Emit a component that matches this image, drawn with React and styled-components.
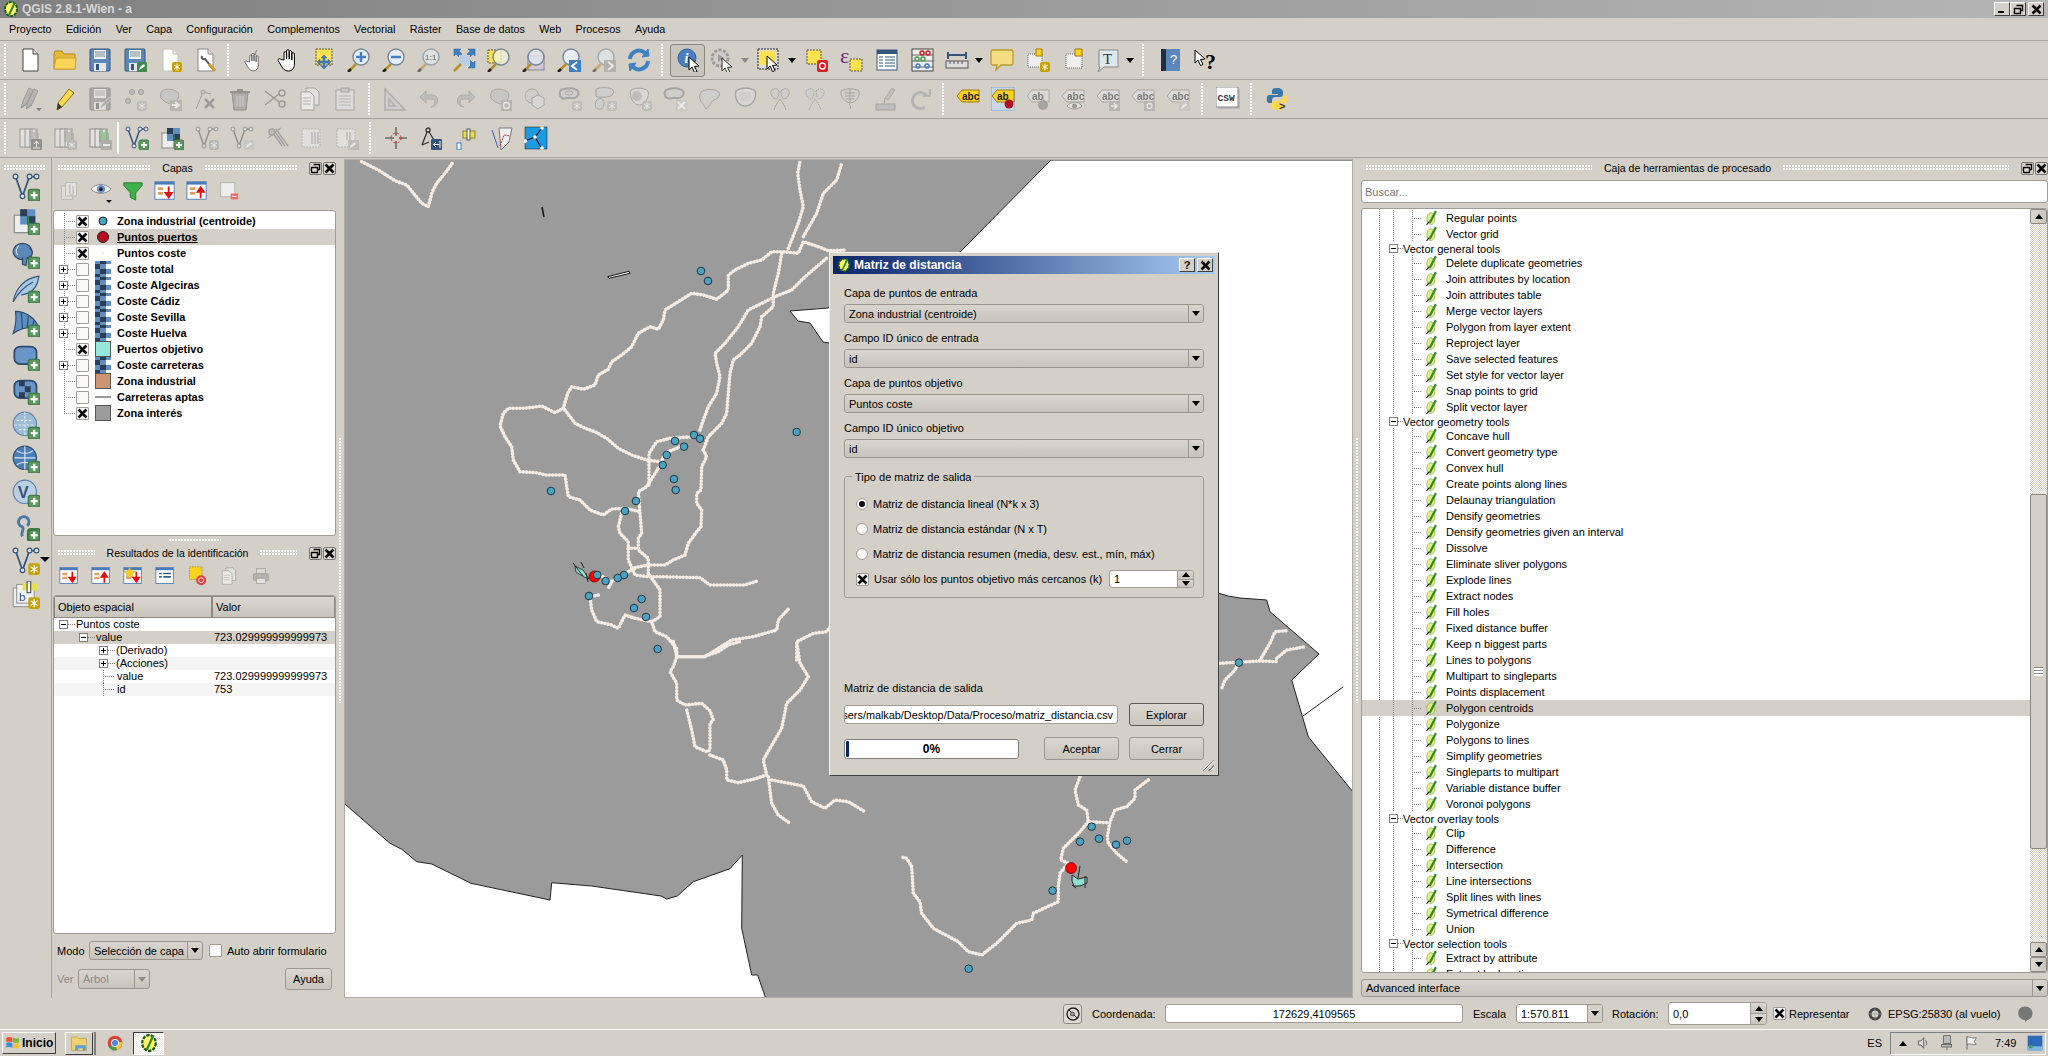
import React from 'react';
import styled, { createGlobalStyle } from 'styled-components';

const GlobalStyle = createGlobalStyle`
  html, body { margin: 0; padding: 0; overflow: hidden; background: #d4d0c8; }
  body { font: 11px "Liberation Sans", Arial, sans-serif; color: #000; }
  * { box-sizing: border-box; }
  svg { display: block; flex: none; }
`;

const BG = '#d4d0c8';
const LINE = '#a8a49c';
const dots = `radial-gradient(circle at 1px 1px, #fff 0.9px, transparent 1.1px)`;
const guideV = (x, h = '100%') => `repeating-linear-gradient(#808080 0 1px, transparent 1px 2px) ${x}px 0 / 1px ${h} no-repeat`;
const guideH = (x, w) => `repeating-linear-gradient(90deg, #808080 0 1px, transparent 1px 2px) ${x}px 50% / ${w}px 1px no-repeat`;

const Desktop = styled.div`
  width: 2048px; height: 1056px; display: flex; flex-direction: column;
  position: relative; overflow: hidden; background: ${BG};
`;
const TitleBar = styled.div`
  height: 18px; display: flex; align-items: center; padding: 0 4px 0 3px; gap: 3px;
  background: linear-gradient(90deg, #808080, #b5b5b5); color: #d8d8d8;
  font-size: 12px; font-weight: bold; white-space: nowrap;
`;
const WinButtons = styled.div`margin-left: auto; display: flex; gap: 0;`;
const WinButton = styled.div`
  width: 16px; height: 14px; margin-left: ${p => p.$gap || 0}px; background: ${BG};
  border: 1px solid; border-color: #fff #404040 #404040 #fff;
  display: flex; align-items: center; justify-content: center;
`;
const MenuBar = styled.div`
  height: 23px; display: flex; align-items: center; padding: 0 0 0 9px; gap: 14.3px; font-size: 10.8px;
  border-bottom: 1px solid ${LINE};
`;
const Toolbar = styled.div`
  height: 39px; display: flex; align-items: center; border-bottom: 1px solid ${LINE};
`;
const Grip = styled.div`
  width: ${p => p.$w}px; height: 32px; flex: none;
  background-image: ${dots}; background-size: 3px 3px; background-repeat: repeat-y;
  background-position: ${p => Math.max(2, Math.round(p.$w / 2) - 2)}px 0;
`;
const ToolDivider = styled.div`width: 2px; height: 32px; background: #fff; flex: none;`;
const Tool = styled.div`
  width: ${p => p.$w || 35}px; height: 33px; flex: none; display: flex; align-items: center; justify-content: center;
  ${p => p.$off && 'filter: grayscale(1) opacity(.5);'}
  ${p => p.$on && `background: #c9c5bd; border: 1px solid #8a867e; border-radius: 3px;`}
`;
const DropArrow = styled.div`
  width: 0; height: 0; border: 4.5px solid transparent; border-top: 5px solid ${p => p.$off ? '#8a8a8a' : '#000'}; border-bottom: 0;
`;

const Body = styled.div`height: 840px; display: flex; flex: none;`;
const LeftBar = styled.div`
  width: 52px; flex: none; border-right: 1px solid ${LINE}; padding-top: 12px;
  display: flex; flex-direction: column; position: relative;
`;
const LeftBarGrip = styled.div`
  position: absolute; left: 4px; top: 7px; width: 42px; height: 6px;
  background-image: ${dots}; background-size: 3px 3px;
`;
const LeftTool = styled.div`
  height: 34px; display: flex; align-items: center; justify-content: center; position: relative;
`;
const LeftToolArrow = styled.div`
  position: absolute; right: 1px; top: 13px; width: 0; height: 0; border: 5px solid transparent; border-top: 5px solid #000; border-bottom: 0;
`;
const Dock = styled.div`
  width: ${p => p.$w}px; flex: none; display: flex; flex-direction: column; padding: ${p => p.$pad || '2px 1px 0'};
`;
const DockTitle = styled.div`
  height: 16px; flex: none; display: flex; align-items: center; gap: 12px; padding: 0 0 0 5px; white-space: nowrap; font-size: 10.5px;
`;
const TitleGrip = styled.div`
  flex: 1 1 0; min-width: 0; height: 6px; background-image: ${dots}; background-size: 3px 3px;
`;
const DockBtns = styled.div`display: flex; flex: none;`;
const DockBtn = styled.div`
  width: 13px; height: 13px; margin-left: ${p => p.$ml ?? 1}px; border: 1px solid #777; border-radius: 2px; background: #dedad3;
  display: flex; align-items: center; justify-content: center;
`;
const IconRow = styled.div`height: 30px; flex: none; display: flex; align-items: center;`;
const PanelTool = styled.div`
  width: 32px; height: 28px; flex: none; display: flex; align-items: center; justify-content: center; position: relative;
  ${p => p.$off && 'filter: grayscale(1) opacity(.55);'}
`;
const MiniArrow = styled.div`
  position: absolute; right: 5px; bottom: 2px; width: 0; height: 0; border: 3px solid transparent; border-top: 3px solid #000; border-bottom: 0;
`;
const Sunken = styled.div`
  background: #fff; border: 1px solid #a09c94; border-radius: 3px; overflow: hidden; flex: none;
  margin-top: ${p => p.$mt || 0}px; height: ${p => p.$h}px; padding-top: ${p => p.$pt || 0}px;
`;
const LayerRow = styled.div`
  height: 16px; display: flex; align-items: center; font-weight: bold;
  background: ${p => p.$sel ? BG : 'transparent'};
  text-decoration: ${p => p.$sel ? 'underline' : 'none'};
`;
const LayerGuide = styled.div`
  width: 22px; height: 16px; flex: none; display: flex; align-items: center; padding-left: 5px;
  background: ${guideH(10, 12)}, ${p => guideV(10, p.$last ? '8px' : '100%')};
`;
const ExpBox = styled.div`
  width: 9px; height: 9px; border: 1px solid #808080; background: #fff; position: relative; flex: none;
  &::before { content: ''; position: absolute; left: 1px; top: 3px; width: 5px; height: 1px; background: #000; }
  ${p => !p.$open && `&::after { content: ''; position: absolute; left: 3px; top: 1px; width: 1px; height: 5px; background: #000; }`}
`;
const Check = styled.div`
  width: 13px; height: 13px; flex: none; margin-left: ${p => p.$ml || 0}px; border: 1px solid #a09c94; border-radius: 1px; background: #fafafa;
  display: flex; align-items: center; justify-content: center;
`;
const SymbolSlot = styled.div`
  width: 16px; height: 16px; margin: 0 6px; flex: none; display: flex; align-items: center; justify-content: center;
`;
const Splitter = styled.div`
  width: ${p => p.$w}px; flex: none; display: flex; align-items: center; justify-content: center;
`;
const SplitGrip = styled.div`
  width: 3px; height: 265px; margin-top: -16px; background-image: ${dots}; background-size: 3px 3px;
`;
const HandleRow = styled.div`height: 9px; flex: none; display: flex; align-items: center; justify-content: center;`;
const HandleGrip = styled.div`width: 52px; height: 3px; background-image: ${dots}; background-size: 3px 3px;`;

const TableHead = styled.div`height: 22px; display: flex;`;
const HeadCell = styled.div`
  width: ${p => p.$w}px; height: 22px; flex: ${p => p.$w ? 'none' : 1}; background: linear-gradient(#dcd8d1, #c8c4bc);
  border: 1px solid #8d8980; display: flex; align-items: center; padding-left: 3px; font-size: 11px;
`;
const ResultRow = styled.div`
  height: 13px; line-height: 13px; display: flex; align-items: center; white-space: nowrap;
  background: ${p => p.$sel ? BG : p.$alt ? '#f5f5f5' : '#fff'};
`;
const ResultName = styled.div`
  width: 160px; height: 13px; flex: none; display: flex; align-items: center; gap: 8px; padding-left: ${p => p.$in}px;
  background: ${p => p.$leaf ? `${guideV(p.$in + 4)}, ${guideH(p.$in + 4, 12)}` : guideH(p.$in + 9, 7)};
`;
const LeafName = styled.span`padding-left: 18px;`;
const FormRow = styled.div`
  display: flex; align-items: center; height: ${p => p.$h}px; margin-top: ${p => p.$mt}px; padding-left: 4px; flex: none;
`;
const FormLabel = styled.div`
  width: ${p => p.$w}px; flex: none; margin-left: ${p => p.$ml || 0}px; color: ${p => p.$off ? '#8a8a8a' : '#000'}; white-space: nowrap;
`;
const Combo = styled.div`
  width: ${p => p.$w ? `${p.$w}px` : '100%'}; height: ${p => p.$h || 19}px; flex: none; display: flex; align-items: center;
  background: ${p => p.$field ? '#fff' : 'linear-gradient(#dad6cf, #c8c4bc)'}; border: 1px solid #9b978f; border-radius: 3px; white-space: nowrap;
  color: ${p => p.$off ? '#8a8a8a' : '#000'}; overflow: hidden;
`;
const ComboText = styled.div`flex: 1; padding-left: 4px;`;
const ComboArrow = styled.div`
  width: 15px; height: 100%; border-left: 1px solid #9b978f; display: flex; align-items: center; justify-content: center; flex: none;
  ${p => p.$solid && `background: ${BG};`}
`;
const ComboGap = styled.div`height: 6px; flex: none;`;
const PushButton = styled.div`
  width: ${p => p.$w}px; height: ${p => p.$h}px; flex: none; display: flex; align-items: center; justify-content: center;
  margin-left: ${p => p.$ml || 0}px; background: linear-gradient(#dcd8d1, #c9c5bd);
  border: 1px solid ${p => p.$def ? '#5c5a55' : '#9b978f'}; border-radius: 3px;
`;

const MapFrame = styled.div`
  width: 1009px; flex: none; margin-top: 1px; border: 1px solid #b0aca4; overflow: hidden; background: #9b9b9b;
`;

const SearchBox = styled.div`
  height: 23px; margin-top: 4px; flex: none; background: #fff; border: 1px solid #a09c94; border-radius: 3px;
  display: flex; align-items: center; padding-left: 3px; color: #777;
`;
const ToolTreeBox = styled.div`
  height: 765px; margin-top: 5px; flex: none; display: flex; background: #fff; border: 1px solid #a09c94; border-radius: 3px; overflow: hidden;
`;
const ToolTree = styled.div`
  flex: 1; overflow: hidden; padding-top: 1px;
  background: ${guideV(17)};
`;
const CategoryRow = styled.div`
  height: 13px; display: flex; align-items: center; gap: 5px; padding-left: 27px; white-space: nowrap;
  background: ${guideH(36, 6)};
`;
const ItemRow = styled.div`
  height: 16px; display: flex; align-items: center; padding-left: 62px; white-space: nowrap;
  background: ${guideV(31)}, ${guideV(50)}, ${guideH(50, 10)}, ${p => p.$sel ? BG : 'transparent'};
`;
const ItemLabel = styled.span`margin-left: 7px;`;
const ScrollBar = styled.div`
  width: 17px; flex: none; display: flex; flex-direction: column;
  background: repeating-conic-gradient(#fff 0 25%, ${BG} 0 50%) 0 0 / 2px 2px;
`;
const ScrollBtn = styled.div`
  height: 15px; flex: none; background: linear-gradient(90deg, #dcd8d1, #c9c5bd); border: 1px solid #8d8980; border-radius: 2px;
  display: flex; align-items: center; justify-content: center;
`;
const ScrollThumb = styled.div`
  height: 355px; flex: none; margin-top: 270px; margin-bottom: auto; background: ${BG}; border: 1px solid #8d8980; border-radius: 2px;
  display: flex; align-items: center; justify-content: center;
`;
const ThumbRidges = styled.div`
  width: 9px; height: 9px; background: repeating-linear-gradient(#8d8980 0 1px, #fff 1px 3px);
`;
const Tri = styled.div`
  width: 0; height: 0; border-left: 4px solid transparent; border-right: 4px solid transparent;
  ${p => p.$up ? 'border-bottom: 5px solid #000;' : 'border-top: 5px solid #000;'}
`;

const StatusBar = styled.div`
  height: 31px; flex: none; display: flex; align-items: center; padding-left: 1063px; white-space: nowrap;
`;
const StatusIcon = styled.div`
  width: 19px; height: 20px; flex: none; margin-right: 10px; background: #dedad3; border: 1px solid #8d8980; border-radius: 3px;
  display: flex; align-items: center; justify-content: center;
`;
const StatusText = styled.div`width: ${p => p.$w}px; flex: none; margin-left: ${p => p.$ml || 0}px;`;
const LineInput = styled.div`
  width: ${p => p.$w}px; height: ${p => p.$h}px; flex: none; display: flex; align-items: center;
  justify-content: ${p => p.$center ? 'center' : 'flex-end'}; padding-right: ${p => p.$center ? 0 : 4}px; overflow: hidden; white-space: nowrap;
  font-size: ${p => p.$center ? 11 : 10.85}px;
  background: #fff; border: 1px solid #a09c94; border-radius: 3px;
`;
const SpinBox = styled.div`
  width: ${p => p.$w}px; height: ${p => p.$h}px; flex: none; display: flex; background: #fff; border: 1px solid #a09c94; border-radius: 3px; overflow: hidden;
`;
const SpinText = styled.div`flex: 1; display: flex; align-items: center; padding-left: 4px;`;
const SpinArrows = styled.div`
  width: 16px; flex: none; display: flex; flex-direction: column; border-left: 1px solid #a09c94;
`;
const SpinPart = styled.div`
  flex: 1; background: linear-gradient(#dcd8d1, #c9c5bd); display: flex; align-items: center; justify-content: center;
  & + & { border-top: 1px solid #a09c94; }
`;

const Taskbar = styled.div`
  height: 27px; flex: none; border-top: 1px solid #fff; display: flex; align-items: center; padding: 0 2px;
`;
const StartButton = styled.div`
  width: 54px; height: 22px; flex: none; display: flex; align-items: center; gap: 1px; padding-left: 2px;
  font-weight: bold; font-size: 12px; background: ${BG}; border: 1px solid; border-color: #fff #404040 #404040 #fff;
`;
const TaskApp = styled.div`
  width: ${p => p.$w}px; height: 23px; flex: none; margin-left: ${p => p.$ml || 0}px; display: flex; align-items: center; justify-content: center;
  border: 1px solid; border-color: ${p => p.$down ? '#404040 #fff #fff #404040' : '#fff #404040 #404040 #fff'};
  ${p => p.$down && 'background: repeating-conic-gradient(#fff 0 25%, #f0eee8 0 50%) 0 0 / 2px 2px;'}
`;
const TaskSeam = styled.div`width: 3px; height: 23px; flex: none; border-right: 2px solid #808080;`;
const TaskPlain = styled.div`width: ${p => p.$w}px; flex: none; display: flex; align-items: center; justify-content: center;`;
const Lang = styled.div`margin-left: auto; margin-right: 8px;`;
const Tray = styled.div`
  width: 156px; height: 23px; flex: none; display: flex; align-items: center; gap: 8px; padding-left: 8px;
  border: 1px solid; border-color: #808080 #fff #fff #808080;
`;
const Clock = styled.div`margin: 0 3px 0 8px;`;

const Dialog = styled.div`
  position: absolute; left: 829px; top: 252px; width: 390px; height: 524px; padding: 3px; background: ${BG};
  border: 1px solid; border-color: #f4f2ee #404040 #404040 #f4f2ee; display: flex; flex-direction: column;
`;
const DialogTitle = styled.div`
  height: 18px; flex: none; display: flex; align-items: center; gap: 3px; padding: 0 2px 0 4px;
  background: linear-gradient(90deg, #0a246a, #a6caf0); color: #fff; font-weight: bold; font-size: 12px;
`;
const DialogBtns = styled.div`margin-left: auto; display: flex; gap: 2px;`;
const DialogBtn = styled.div`
  width: 16px; height: 14px; background: ${BG}; color: #000; display: flex; align-items: center; justify-content: center;
  border: 1px solid; border-color: #fff #404040 #404040 #fff; font-size: 11px; line-height: 1;
`;
const DialogBody = styled.div`flex: 1; padding: 12px 11px 0; position: relative;`;
const Field = styled.div`margin-bottom: 8px;`;
const FieldLabel = styled.div`height: 14px; line-height: 14px; margin-bottom: 4px;`;
const Group = styled.div`
  height: 122px; margin-top: 18px; padding: 18px 0 0 11px; position: relative; border: 1px solid #a09c94; border-radius: 3px;
  display: flex; flex-direction: column; gap: 7px;
`;
const Legend = styled.div`position: absolute; left: 7px; top: -7px; padding: 0 3px; background: ${BG}; line-height: 14px;`;
const OptionRow = styled.div`height: 18px; display: flex; align-items: center; gap: 5px; white-space: nowrap;`;
const OptionText = styled.div`width: 230px;`;
const Radio = styled.div`
  width: 12px; height: 12px; flex: none; border-radius: 50%; background: #fbfbfb; border: 1px solid #a09c94; display: flex; align-items: center; justify-content: center;
  &::after { content: ''; width: 6px; height: 6px; border-radius: 50%; background: ${p => p.$on ? '#000' : 'transparent'}; }
`;
const OutLabel = styled.div`height: 14px; line-height: 14px; margin-top: 83px;`;
const OutRow = styled.div`height: 23px; margin-top: 8px; display: flex; align-items: center;`;
const BottomRow = styled.div`height: 23px; margin-top: 11px; display: flex; align-items: center;`;
const Progress = styled.div`
  width: 175px; height: 20px; flex: none; position: relative; background: #fff; border: 1px solid #808080; border-radius: 3px;
  display: flex; align-items: center; justify-content: center; font-weight: bold; font-size: 12px; overflow: hidden;
`;
const ProgressFill = styled.div`position: absolute; left: 1px; top: 1px; bottom: 1px; width: 3px; background: #0a246a; border-radius: 1px;`;
const SizeGrip = styled.div`
  position: absolute; right: 1px; bottom: 1px; width: 13px; height: 13px;
  background: repeating-linear-gradient(135deg, transparent 0 2px, #888 2px 3px, #fff 3px 4px);
  clip-path: polygon(100% 0, 100% 100%, 0 100%);
`;

/* ---------- icons ---------- */
const Plus = () => (<g><rect x="14" y="14" width="10" height="10" rx="2" fill="#5b9a5e" stroke="#3f7a44" /><path d="M19 16v6M16 19h6" stroke="#fff" strokeWidth="2" /></g>);
const Star = ({ c = '#c9a000' }) => (<g><rect x="14" y="14" width="10" height="10" rx="2" fill={c} /><path d="M19 15.5v7M16 17l6 4M22 17l-6 4" stroke="#fff" /></g>);
const GreenEdit = () => (<g><rect x="14" y="14" width="10" height="10" rx="1" fill="#3f8a4a" /><path d="M16 22l1-3 4-3 1 2-4 3z" fill="#fff" /></g>);
const Cursor = ({ x = 10, y = 8, k = 1 }) => (<path transform={`translate(${x} ${y}) scale(${k})`} d="M0 0v13l3-3 2.5 5.5 2.5-1L5.5 9.5 10 9z" fill="#fff" stroke="#000" />);
const Page = ({ stroke = '#444' }) => (<g><path d="M5 1h10l5 5v17H5z" fill="#fff" stroke={stroke} /><path d="M15 1v5h5" fill="#e4e4e4" stroke={stroke} /></g>);
const Floppy = () => (<g><rect x="2" y="1" width="20" height="22" rx="1" fill="#5b88b8" stroke="#34557a" /><rect x="6" y="2" width="12" height="9" fill="#f2f4f6" /><path d="M7 4h10M7 6h10M7 8h10" stroke="#7a8a9a" /><rect x="6" y="15" width="12" height="8" fill="#e6e6e6" /><rect x="8" y="16" width="3" height="6" fill="#34557a" /></g>);
const Lens = ({ children, glass = '#e8eef4' }) => (<g><path d="M2 23l7-7" stroke="#b5902a" strokeWidth="2.5" /><path d="M1 24l3-3" stroke="#222" strokeWidth="2.5" /><circle cx="14" cy="9" r="8" fill={glass} stroke="#7a8a9a" strokeWidth="1.5" />{children}</g>);
const Hand = ({ fill = '#fff', stroke = '#000' }) => (<path d="M7 12V5a1.3 1.3 0 0 1 2.6 0v6V3a1.3 1.3 0 0 1 2.6 0v8V4a1.3 1.3 0 0 1 2.6 0v8V6a1.3 1.3 0 0 1 2.6 0v10c0 4-2 7-6 7s-5-2-7-5l-3-5c-1-2 1-3 2.5-1.5z" fill={fill} stroke={stroke} strokeLinejoin="round" />);
const YellowDash = ({ x = 3, y = 3, s = 16 }) => (<rect x={x} y={y} width={s} height={s} fill="#ffe24d" stroke="#555" strokeDasharray="2 1" />);
const Blob = ({ fill = '#bbb' }) => (<path d="M4 4c4-3 10-2 14 0c4 2 3 7 1 9c-3 2-3 5-7 4c-3-1-7-3-9-6c-1-2 0-6 1-7z" fill={fill} stroke="#777" />);
const DocStack = () => (<g><rect x="2" y="3" width="7" height="18" fill="#eee" stroke="#666" /><rect x="7" y="3" width="7" height="18" fill="#eee" stroke="#666" /><rect x="12" y="3" width="7" height="18" fill="#eee" stroke="#666" /></g>);
const Grass = () => (<path d="M12 16V5M14 16V3M16 16V6M18 16V4M20 16V7" stroke="#3f9a4a" strokeWidth="1.3" />);
const VLine = () => (<g><path d="M3 3l6 17 6-17h6" fill="none" stroke="#34557a" strokeWidth="1.5" /><g fill="#dfe8f0" stroke="#34557a"><circle cx="3" cy="3" r="2" /><circle cx="9" cy="20" r="2" /><circle cx="15" cy="3" r="2" /><circle cx="21" cy="3" r="2" /></g></g>);
const Globe = ({ children }) => (<g><circle cx="11" cy="11" r="10" fill="#9dbcd8" stroke="#5a7fa8" /><path d="M4 8h14M2 12h18M6 16h10M11 1v20" stroke="#e4eef6" strokeDasharray="2 1.5" />{children}</g>);
const Sheet = ({ up, star }) => (<g><rect x="1" y="2" width="21" height="19" fill="#fff" stroke="#4a7ab8" /><rect x="1" y="2" width="21" height="3" fill="#4a7ab8" /><path d="M4 8h6v3H4zM4 13h6v3H4z" fill="#e8a060" />{star && <path d="M8 1l2 5 5 .5-4 3 1.5 5L8 12l-4.500 2.500L5 9.500l-4-3 5-.5z" fill="#ffd21f" stroke="#b08a20" strokeWidth=".5" />}<path d={up ? 'M16 20V11M12.500 13l3.500-5 3.500 5z' : 'M16 7v9M12.500 14l3.500 5 3.500-5z'} stroke="#e01010" strokeWidth="2" fill="#e01010" /></g>);
const TwoDocs = () => (<g><path d="M8 1h9l4 4v13H8z" fill="#eee" stroke="#777" /><path d="M3 5h9l4 4v14H3z" fill="#fff" stroke="#777" /><path d="M5 11h8M5 14h8M5 17h8" stroke="#999" /></g>);
const AbcTag = ({ fill = '#ffd21f', txt = 'abc' }) => (<g><path d="M1 9l5-6h17v12H6z" fill={fill} stroke="#9a7a10" strokeWidth="1" /><text x="6" y="13" fontFamily="Liberation Sans" fontWeight="bold" fontSize="10" fill="#222">{txt}</text></g>);
const GrayTag = ({ txt = 'abc' }) => (<AbcTag fill="#e4e2dc" txt={txt} />);
const QLeaf = () => (<g><ellipse cx="11" cy="13" rx="6.500" ry="9.500" fill="#e2ee80" stroke="#8aa52a" /><path d="M19 1L9 20" stroke="#2f8a2f" strokeWidth="3.500" /><path d="M4 23l4-5" stroke="#222" strokeWidth="1.800" /></g>);
const XMark = () => (<svg width="11" height="11" viewBox="0 0 11 11"><path d="M1.500 1.500l8 8M9.500 1.500l-8 8" stroke="#000" strokeWidth="2.600" /></svg>);

const ICONS = {
  doc: <Page />,
  folder: <g><path d="M1 6l1-3h7l2 3h11v15H1z" fill="#e8b93a" stroke="#b08a20" /><path d="M1 21l2-11h20l-1 11z" fill="#ffd65a" stroke="#c9a030" /></g>,
  floppy: <Floppy />,
  floppyEdit: <g><Floppy /><GreenEdit /></g>,
  docStar: <g><Page stroke="#c4c0b8" /><Star /></g>,
  docWrench: <g><Page stroke="#888" /><path d="M9 8c-1 2 1 4 3 3l8 10" stroke="#555" strokeWidth="2" fill="none" /><path d="M16 16l6 7" stroke="#c9a030" strokeWidth="3" /></g>,
  touch: <g><path d="M15 2l-5 9" stroke="#777" /><g transform="translate(2 4) scale(.82)"><Hand stroke="#555" /></g></g>,
  hand: <Hand />,
  panSel: <g><YellowDash x="4" y="1" s="16" /><path d="M12 7l3 3h-2v3h3v-2l3 3-3 3v-2h-3v3h2l-3 3-3-3h2v-3H8v2l-3-3 3-3v2h3v-3H9z" fill="#3f7fc4" stroke="#2f5f94" strokeWidth=".5" /></g>,
  zoomIn: <Lens><path d="M14 4v10M9 9h10" stroke="#3f7fc4" strokeWidth="2.500" /></Lens>,
  zoomOut: <Lens><path d="M9 9h10" stroke="#3f7fc4" strokeWidth="2.500" /></Lens>,
  zoom11: <g opacity=".6"><Lens><text x="8" y="12" fontFamily="Liberation Sans" fontWeight="bold" fontSize="8" fill="#555">1:1</text></Lens></g>,
  zoomFull: <g><path d="M2 1h7L7 3l3 3-3 3-3-3-2 2zM23 1v7l-2-2-3 3-3-3 3-3-2-2zM23 20h-7l2-2-3-3 3-3 3 3 2-2z" fill="#3f7fc4" stroke="#2f5f94" strokeWidth=".5" /><rect x="7" y="7" width="11" height="11" fill="#b8cfe4" /><path d="M2 23l7-7" stroke="#b5902a" strokeWidth="2.500" /></g>,
  zoomSel: <g><YellowDash x="1" y="2" s="13" /><Lens glass="rgba(240,244,220,.75)" /></g>,
  zoomLayer: <g><rect x="6" y="8" width="16" height="14" fill="#cfc8d8" stroke="#8a8298" /><Lens glass="rgba(225,230,240,.8)" /></g>,
  zoomLast: <g><Lens /><rect x="12" y="12" width="12" height="12" fill="#3f7fc4" /><path d="M20 14l-5 4 5 4" stroke="#fff" strokeWidth="2" fill="none" /></g>,
  zoomNext: <g opacity=".55"><Lens /><rect x="12" y="12" width="12" height="12" fill="#999" /><path d="M16 14l5 4-5 4" stroke="#fff" strokeWidth="2" fill="none" /></g>,
  refresh: <g fill="none" stroke="#3f7fc4" strokeWidth="4"><path d="M3 11a9 9 0 0 1 15-6" /><path d="M21 13a9 9 0 0 1-15 6" /><path d="M15 9l7-1-1-7z M9 15l-7 1 1 7z" fill="#3f7fc4" strokeWidth="1" /></g>,
  identify: <g><circle cx="11" cy="10" r="9" fill="#4a80c0" stroke="#2f5f94" /><text x="8.500" y="15" fontFamily="Liberation Serif" fontStyle="italic" fontWeight="bold" fontSize="14" fill="#fff">i</text><Cursor x="13" y="9" /></g>,
  run: <g opacity=".75"><circle cx="11" cy="10" r="8" fill="#ccc" stroke="#888" strokeWidth="3" strokeDasharray="3 1.500" /><path d="M9 6l6 4-6 4z" fill="#888" /><Cursor x="13" y="10" /></g>,
  select: <g><rect x="1" y="1" width="20" height="20" fill="#ddd" stroke="#222" strokeDasharray="2 1" /><rect x="3" y="3" width="15" height="14" fill="#ffe24d" /><Cursor x="10" y="8" /></g>,
  deselect: <g><YellowDash x="2" y="2" s="14" /><rect x="12" y="12" width="11" height="12" rx="2" fill="#d82020" /><circle cx="17.500" cy="18" r="3" fill="none" stroke="#fff" strokeWidth="1.300" /></g>,
  expr: <g><text x="0" y="15" fontFamily="Liberation Serif" fontSize="22" fill="#6a2a7a">ε</text><YellowDash x="10" y="11" s="12" /></g>,
  attrTable: <g><rect x="2" y="2" width="20" height="20" fill="#fff" stroke="#34557a" /><rect x="2" y="2" width="20" height="4" fill="#34557a" /><path d="M4 9h4M10 9h10M4 12h4M10 12h10M4 15h4M10 15h10M4 18h4M10 18h10" stroke="#34557a" /></g>,
  abacus: <g><rect x="2" y="1" width="21" height="22" fill="#eee" stroke="#444" /><path d="M2 7h21M2 13h21M2 19h21" stroke="#666" /><g fill="none" strokeWidth="1.500"><circle cx="12" cy="5" r="2" stroke="#c02020" /><circle cx="18" cy="5" r="2" stroke="#c02020" /><circle cx="7" cy="11" r="2" stroke="#4a9a4a" /><circle cx="13" cy="11" r="2" stroke="#4a9a4a" /><circle cx="8" cy="18" r="2" stroke="#3f7fc4" /><circle cx="17" cy="18" r="2" stroke="#3f7fc4" /></g></g>,
  ruler: <g><path d="M3 4v7M21 4v7M3 7h18" stroke="#34557a" strokeWidth="2" /><rect x="1" y="13" width="22" height="7" fill="#ddd" stroke="#555" /><path d="M5 13v3M9 13v3M13 13v3M17 13v3" stroke="#555" /></g>,
  bubble: <path d="M3 2h18q2 0 2 2v11q0 2-2 2H11l-5 5 1-5H3q-2 0-2-2V4q0-2 2-2z" fill="#f4dc80" stroke="#b89a30" strokeWidth="1.300" />,
  annoStar: <g><rect x="2" y="6" width="14" height="13" fill="#eee" stroke="#666" strokeDasharray="1 1" /><path d="M10 1h6v7h-6z" fill="#ffd21f" stroke="#9a7a10" /><Star /></g>,
  anno: <g><rect x="4" y="6" width="16" height="14" fill="#eee" stroke="#666" strokeDasharray="1 1" /><path d="M13 1h7v7h-7z" fill="#ffd21f" stroke="#9a7a10" /></g>,
  textT: <g><path d="M3 2h19v17H8l-6 5 2-5H3z" fill="#dfe7ee" stroke="#888" /><text x="7" y="16" fontFamily="Liberation Serif" fontSize="15" fill="#333">T</text></g>,
  help: <g><rect x="3" y="1" width="19" height="22" fill="#5b88b8" /><rect x="3" y="1" width="5" height="22" fill="#1f2f44" /><text x="12" y="16" fontFamily="Liberation Sans" fontSize="13" fill="#fff">?</text></g>,
  whats: <g><Cursor x="2" y="2" /><text x="12" y="21" fontFamily="Liberation Serif" fontWeight="bold" fontSize="22" fill="#000">?</text></g>,

  pencils: <g><path d="M3 21l2-7L11 1l4 2-6 13zM8 22l2-7L16 2l4 2-6 13z" fill="#999" stroke="#666" /><path d="M3 21l6-4M8 22l6-4" stroke="#555" /><path d="M18 21h6l-3 3z" fill="#333" /></g>,
  pencil: <g><path d="M4 23l1-7L16 2l5 4L9 20z" fill="#ffd84a" stroke="#8a7018" /><path d="M4 23l1-7 4 4z" fill="#333" /></g>,
  saveEdit: <g><Floppy /><path d="M12 22l2-5 8-7 2 2-8 7z" fill="#888" stroke="#fff" strokeWidth=".5" /></g>,
  ptsAdd: <g><g fill="#aaa" stroke="#666"><circle cx="5" cy="14" r="2.500" /><circle cx="9" cy="5" r="2.500" /><circle cx="18" cy="5" r="2.500" /></g><Star c="#aaa" /></g>,
  blobArrow: <g><Blob /><rect x="12" y="13" width="12" height="11" fill="#999" /><path d="M14 18h5M17 15l4 3-4 3" stroke="#fff" strokeWidth="2" fill="none" /></g>,
  nodeTool: <g><path d="M3 22L10 5l8 2" fill="none" stroke="#666" /><circle cx="10" cy="5" r="2" fill="#ccc" stroke="#666" /><path d="M12 12l9 9M21 12l-9 9" stroke="#666" strokeWidth="2.500" /></g>,
  trash: <g><path d="M4 6h16l-2 17H6z" fill="#888" stroke="#555" /><path d="M2 5h20M9 3h6" stroke="#555" strokeWidth="2" /><path d="M9 9v11M12 9v11M15 9v11" stroke="#ddd" /></g>,
  cut: <g fill="none" stroke="#666" strokeWidth="1.500"><path d="M2 4l14 11M2 18L16 7" /><circle cx="19" cy="17" r="3" /><circle cx="19" cy="6" r="3" /></g>,
  copy: <TwoDocs />,
  paste: <g><rect x="3" y="3" width="18" height="20" fill="#e6e6e6" stroke="#777" /><rect x="8" y="1" width="8" height="4" fill="#bbb" stroke="#777" /><path d="M6 9h12M6 12h12M6 15h12M6 18h12" stroke="#999" /></g>,
  setSquare: <g fill="none" stroke="#888" strokeWidth="1.500"><path d="M2 2l20 21H2z" fill="#ccc" /><path d="M6 12l6 7H6z" fill="#d4d0c8" /></g>,
  undo: <path d="M8 4L2 10l6 6v-4h6c4 0 4 7-1 8c8 0 9-12 1-12H8z" fill="#aaa" stroke="#888" />,
  redo: <path d="M16 4l6 6-6 6v-4h-6c-4 0-4 7 1 8c-8 0-9-12-1-12h6z" fill="#aaa" stroke="#888" />,
  blobRot: <g><Blob /><rect x="13" y="13" width="11" height="11" fill="#999" /><circle cx="18.500" cy="18.500" r="3" fill="none" stroke="#fff" strokeWidth="1.500" /></g>,
  blobHex: <g><circle cx="9" cy="9" r="7" fill="#ccc" stroke="#777" /><path d="M15 8l6 3v7l-6 4-6-4v-7z" fill="#ddd" stroke="#777" /></g>,
  ringStar: <g><path d="M3 3c5-3 14-2 17 1c2 4-2 8-7 7c-4-1-7 2-9 0c-3-2-3-6-1-8z" fill="#ccc" stroke="#777" strokeWidth="2" /><ellipse cx="11" cy="6" rx="4" ry="2" fill="#d4d0c8" stroke="#777" /><Star c="#aaa" /></g>,
  twoBlobStar: <g><path d="M3 2c5-2 14-2 17 1c2 4-2 7-7 7c-4 0-8 1-10-1z" fill="#ccc" stroke="#777" /><path d="M3 14c3-4 8-3 8 2s-3 7-6 6c-3-1-3-5-2-8z" fill="#ccc" stroke="#777" /><Star c="#aaa" /></g>,
  partStar: <g><path d="M3 3c5-3 14-2 17 1c2 5-3 14-9 14c-6 0-10-9-8-15z" fill="#ddd" stroke="#777" /><circle cx="9" cy="9" r="5" fill="#aaa" /><Star c="#aaa" /></g>,
  ringX: <g><path d="M3 3c5-3 14-2 17 1c2 4-2 8-7 7c-4-1-7 2-9 0c-3-2-3-6-1-8z" fill="#ccc" stroke="#777" strokeWidth="2" /><rect x="13" y="13" width="11" height="11" fill="#bbb" /><path d="M15 15l7 7M22 15l-7 7" stroke="#fff" strokeWidth="2" /></g>,
  bean: <path d="M3 5c5-4 14-3 18 0c2 4-2 7-5 8c-3 1-5 8-8 9c-2-4-6-8-6-10c-1-3 0-5 1-7z" fill="#ccc" stroke="#777" />,
  ringed: <g><path d="M3 4c5-4 14-4 19 0c2 5-1 14-9 15c-8 1-12-9-10-15z" fill="#ddd" stroke="#777" strokeWidth="1.500" /><path d="M6 6c3-2 9-2 12 0c1 3-1 9-6 9c-5 0-7-6-6-9z" fill="#ccc" /></g>,
  split: <g fill="#ccc" stroke="#777"><path d="M3 4c2-3 7-3 8 0c0 3-1 8-3 8c-3 0-6-5-5-8zM13 4c2-3 7-3 8 0c1 3-2 8-5 8c-2 0-3-5-3-8z" /><path d="M6 23c1-4 4-8 6-11c2 3 5 7 6 11" fill="none" /></g>,
  split2: <g fill="#ccc" stroke="#777" strokeDasharray="1.500 .8"><path d="M3 4c2-3 7-3 8 0c0 3-1 8-3 8c-3 0-6-5-5-8zM13 4c2-3 7-3 8 0c1 3-2 8-5 8c-2 0-3-5-3-8z" /><path d="M6 23c1-4 4-8 6-11c2 3 5 7 6 11" fill="none" /></g>,
  merge: <g fill="#ccc" stroke="#777"><path d="M3 4c5-3 14-3 18 0c1 5-2 11-9 12c-6-1-10-7-9-12z" /><path d="M12 2v14M7 6h10M7 9h10M8 12h8" fill="none" /><path d="M12 16c-2 2 2 3 0 6" fill="none" /></g>,
  reshape: <g><path d="M19 1l3 2-7 10-3-2z" fill="#aaa" stroke="#888" /><path d="M12 11l-1 6" stroke="#777" /><rect x="3" y="17" width="19" height="6" fill="#aaa" stroke="#777" /></g>,
  rotate: <g fill="none" stroke="#999" strokeWidth="3"><path d="M19 9a8 8 0 1 0-2 11" /><path d="M15 9h7V2" strokeWidth="2" /></g>,
  abc: <AbcTag />,
  abcPin: <g><rect x="0" y="0" width="24" height="24" fill="#c8d8ea" stroke="#7aa0d0" /><AbcTag txt="ab" /><circle cx="18" cy="17" r="4.500" fill="#b01020" /></g>,
  abcMove: <g><GrayTag txt="ab" /><circle cx="17" cy="18" r="5" fill="#777" /><path d="M17 8v6" stroke="#777" /></g>,
  abcEye: <g><GrayTag /><path d="M6 19c4-5 11-5 15 0c-4 4-11 4-15 0z" fill="#eee" stroke="#666" /><circle cx="13.500" cy="19" r="2.500" fill="#666" /></g>,
  abcArrow: <g><GrayTag /><rect x="13" y="14" width="11" height="10" fill="#999" /><path d="M15 19h5M18 16l3 3-3 3" stroke="#fff" strokeWidth="1.500" fill="none" /></g>,
  abcRot: <g><GrayTag /><rect x="13" y="14" width="11" height="10" fill="#999" /><circle cx="18.500" cy="19" r="2.500" fill="none" stroke="#fff" strokeWidth="1.300" /></g>,
  abcEdit: <g><GrayTag /><rect x="13" y="14" width="11" height="10" fill="#bbb" /><path d="M15 22l1-3 4-3 1 2-4 3z" fill="#fff" /></g>,
  csw: <g><rect x="2" y="2" width="22" height="20" fill="#bbb" /><rect x="0" y="0" width="22" height="20" fill="#fff" stroke="#888" /><text x="1.500" y="14" fontFamily="Liberation Mono" fontWeight="bold" fontSize="9.500" fill="#333">CSW</text></g>,
  python: <g><path d="M12 1c-5 0-5 2-5 4v2h6v1H4c-3 0-3 8 0 8h3v-3c0-2 2-3 3-3h5c2 0 3-1 3-3V5c0-2-2-4-6-4z" fill="#3a76a8" /><path d="M13 23c5 0 5-2 5-4v-2h-6v-1h8c3 0 3-8 0-8h-2v3c0 2-2 3-3 3h-5c-2 0-3 1-3 3v3c0 2 2 3 6 3z" fill="#ffd84a" /><text x="14" y="23" fontFamily="Liberation Sans" fontWeight="bold" fontSize="11" fill="#333">&gt;</text></g>,

  rasUp: <g><DocStack /><Grass /><rect x="13" y="13" width="11" height="11" rx="1" fill="#34557a" /><path d="M18.500 15v6M16 18l2.500-3 2.500 3M15 22h7" stroke="#fff" fill="none" /></g>,
  rasStar: <g><DocStack /><Grass /><Star /></g>,
  rasMinus: <g opacity=".6"><DocStack /><Grass /><rect x="13" y="14" width="11" height="10" rx="1" fill="#999" /><path d="M15 19h7" stroke="#fff" strokeWidth="2" /></g>,
  vecAdd: <g><VLine /><Plus /></g>,
  rasAdd: <g><rect x="2" y="7" width="13" height="15" fill="#eee" stroke="#888" /><rect x="7" y="2" width="13" height="13" fill="#5f8fc0" /><path d="M7 2h6v6H7zM13 8h7v7h-7z" fill="#2c3e57" /><path d="M14 15V8" stroke="#3f9a4a" /><Plus /></g>,
  vecStar: <g><VLine /><Star /></g>,
  vecEdit: <g><VLine /><rect x="14" y="14" width="10" height="10" fill="#bbb" /><path d="M16 22l1-3 4-3 1 2-4 3z" fill="#fff" /></g>,
  tangle: <g stroke="#777" strokeWidth="1.500" fill="none"><path d="M5 3l12 17M8 3l12 17M11 3l12 17M16 2L3 12" /><circle cx="7" cy="6" r="3" fill="#aaa" /></g>,
  scrollTangle: <g><rect x="2" y="3" width="18" height="18" fill="#eee" stroke="#999" strokeDasharray="2 1" /><path d="M12 6v12M15 6v12M18 6v12" stroke="#777" /></g>,
  scrollEdit: <g><rect x="2" y="3" width="18" height="18" fill="#eee" stroke="#999" strokeDasharray="2 1" /><path d="M12 6v8M15 6v8" stroke="#777" /><rect x="13" y="14" width="11" height="10" fill="#aaa" /><path d="M15 22l1-3 4-3 1 2-4 3z" fill="#fff" /></g>,
  crosshair: <g fill="none"><path d="M12 1v9M12 15v8M1 12h9M15 12h8" stroke="#333" /><circle cx="12" cy="12" r="5" stroke="#d02020" strokeDasharray="2 2" /></g>,
  compass: <g fill="none" stroke="#333" strokeWidth="1.300"><circle cx="9" cy="4" r="2" /><path d="M8 6L3 19M10 6l5 8" /><path d="M3 19l7-3" /><rect x="12" y="13" width="11" height="11" rx="1" fill="#34557a" stroke="none" /><path d="M20 18.500h-5M17 16l-2.500 2.500L17 21M21 15v7" stroke="#fff" strokeWidth="1" /></g>,
  snapBars: <g><rect x="9" y="5" width="12" height="7" fill="#e6e04a" stroke="#8a8420" /><rect x="13" y="3" width="3" height="11" fill="#fff" stroke="#555" /><rect x="3" y="17" width="4" height="7" fill="#fff" stroke="#3f7fc4" /><path d="M6 15l5-3" stroke="#aaa" strokeDasharray="1.500 1" /></g>,
  digit: <g><path d="M3 4l6 18" stroke="#3f5fb4" fill="none" /><path d="M10 2h13l-3 14-8 8z" fill="#eee" stroke="#777" /><path d="M11 20l4-11 6 1" stroke="#d02020" strokeDasharray="2 1" fill="none" /></g>,
  topoBlue: <g><rect x="1" y="1" width="22" height="22" fill="#1c9be0" stroke="#111" strokeWidth=".5" /><path d="M1 15l10-4 7-9M11 11l7 12" stroke="#111" strokeWidth="1.200" fill="none" /><g fill="#fff"><circle cx="1.500" cy="15" r="1.800" /><circle cx="11" cy="11" r="1.800" /><circle cx="18" cy="2" r="1.800" /><circle cx="18" cy="22" r="1.800" /></g></g>,

  pgAdd: <g><ellipse cx="9" cy="9" rx="8" ry="7" fill="#5b88b8" stroke="#2c4a6a" /><path d="M9 14v6l3 1 1-7M15 6c3 2 3 5 1 8" fill="#5b88b8" stroke="#2c4a6a" /><path d="M6 4c-3 2-3 6-1 8" fill="none" stroke="#d8e4f0" /><Plus /></g>,
  featherAdd: <g><path d="M1 23C3 12 10 3 23 1c-1 9-6 15-15 16" fill="#a8c8e4" stroke="#34557a" /><path d="M1 23C6 14 12 9 18 6" stroke="#34557a" fill="none" /><Plus /></g>,
  sailAdd: <g><path d="M3 2c9 0 17 6 20 14c-7-1-15 0-22 5c2-6 3-13 2-19z" fill="#5f8fc0" stroke="#2c4a6a" /><path d="M8 3l1 14M14 6l-1 10M19 10l-2 6" stroke="#2c4a6a" /><Plus /></g>,
  rectAdd: <g><rect x="2" y="3" width="19" height="15" rx="5" fill="#6a95c8" stroke="#2c4a6a" strokeWidth="1.500" /><Plus /></g>,
  rectChk: <g><rect x="2" y="3" width="19" height="15" rx="5" fill="#6a95c8" stroke="#2c4a6a" strokeWidth="1.500" /><path d="M6 3h5v5H6zM11 8h5v5h-5zM6 13h5v5H6z" fill="#2c3e57" /><Plus /></g>,
  globeAdd: <g><Globe /><Plus /></g>,
  globeB: <g><circle cx="11" cy="11" r="10" fill="#4a80b8" stroke="#2c4a6a" /><path d="M2 11h18M11 1v20M4 5c4 3 10 3 14 0M4 17c4-3 10-3 14 0" stroke="#d8e4f0" fill="none" /><Plus /></g>,
  globeV: <g><circle cx="11" cy="11" r="10" fill="#bcd0e4" stroke="#5a7fa8" /><text x="5" y="16" fontFamily="Liberation Sans" fontWeight="bold" fontSize="14" fill="#34557a">V</text><Plus /></g>,
  gps: <g fill="none" stroke="#4a7aa8" strokeWidth="2.500"><path d="M13 11a4.500 4.500 0 1 0-4 1c2 2-2 5 0 8" /><Plus /></g>,
  vStarMain: <g><VLine /><Star /></g>,
  yellowB: <g><rect x="1" y="6" width="15" height="16" fill="#eee" stroke="#999" /><rect x="4" y="3" width="15" height="16" fill="#f4f4f4" stroke="#999" /><rect x="9" y="2" width="13" height="6" fill="#e6e04a" /><rect x="13" y="0" width="3" height="10" fill="#fff" stroke="#555" /><text x="6" y="17" fontFamily="Liberation Sans" fontSize="10" fill="#34557a">b</text><Star /></g>,

  clip: <g><rect x="3" y="6" width="13" height="16" fill="#e8e8e8" stroke="#999" /><rect x="8" y="2" width="13" height="16" fill="#f2f2f2" stroke="#999" /><path d="M13 4v11a2 2 0 0 0 4 0V6" fill="none" stroke="#777" /></g>,
  eye: <g><path d="M1 10c6-7 16-7 22 0c-6 6-16 6-22 0z" fill="#eee" stroke="#888" /><circle cx="12" cy="10" r="4.500" fill="#6a95c8" /><circle cx="12" cy="10" r="2" fill="#223" /></g>,
  funnel: <path d="M2 3h20v3l-7 8v8l-6-3v-5L2 6z" fill="#3fb04a" stroke="#2a7a33" />,
  sheetDown: <Sheet />,
  sheetUp: <Sheet up />,
  sheetStar: <Sheet star />,
  sheetList: <g><rect x="1" y="2" width="21" height="19" fill="#fff" stroke="#4a7ab8" /><rect x="1" y="2" width="21" height="3" fill="#4a7ab8" /><path d="M5 9h3M10 9h9M5 13h3M10 13h9" stroke="#2f5f94" strokeWidth="2" /></g>,
  yellowNo: <g><rect x="3" y="1" width="15" height="15" fill="#ffd21f" stroke="#b08a20" strokeDasharray="2 1" /><circle cx="17" cy="17" r="6" fill="#e04040" /><circle cx="17" cy="17" r="3" fill="none" stroke="#fff" /></g>,
  print: <g fill="#999" stroke="#777"><rect x="6" y="2" width="12" height="7" fill="#ddd" /><rect x="2" y="9" width="20" height="9" rx="1" /><rect x="6" y="15" width="12" height="7" fill="#eee" /></g>,
  removeSq: <g><rect x="2" y="2" width="17" height="17" fill="#eee" stroke="#aaa" /><rect x="14" y="15" width="9" height="7" fill="#f06a6a" /><path d="M16 18.500h5" stroke="#fff" strokeWidth="1.500" /></g>,
  chrome: <g><circle cx="12" cy="12" r="11" fill="#e04030" /><path d="M12 12L3 18a11 11 0 0 0 12 5z" fill="#3fa04a" /><path d="M12 12l10-2a11 11 0 0 1-7 13z" fill="#f4c430" /><circle cx="12" cy="12" r="5.500" fill="#4a8ae0" stroke="#fff" strokeWidth="1.500" /></g>,
  explorer: <g><path d="M2 4h8l2 2h10v16H2z" fill="#f0d070" stroke="#c0a040" /><path d="M7 15h14v7h-4v-3h-6v3H7z" fill="#5aa0d8" /></g>,
  winlogo: <g><path d="M2 4c3-2 6-1 9 0v7c-3-1-6-2-9 0z" fill="#e8502a" /><path d="M12 4c3 1 6 2 9 0v7c-3 2-6 1-9 0z" fill="#7ab83a" /><path d="M2 12c3-2 6-1 9 0v7c-3-1-6-2-9 0z" fill="#3a90d8" /><path d="M12 12c3 1 6 2 9 0v7c-3 2-6 1-9 0z" fill="#f4c430" /></g>,
  satellite: <g fill="none" stroke="#222"><circle cx="12" cy="12" r="9" strokeWidth="2" /><path d="M6 6l12 12M16 3l5 5" strokeWidth="1.500" /><circle cx="11" cy="12" r="3" fill="#999" /></g>,
  epsg: <g><circle cx="12" cy="12" r="11" fill="#444" /><circle cx="12" cy="12" r="6" fill="#d4d0c8" /><path d="M12 1v22M1 12h22" stroke="#999" /></g>,
  msgBubble: <path d="M12 2c6 0 10 4 10 9s-3 8-7 9l-3 3v-3c-5 0-9-4-9-9s3-9 9-9z" fill="#777" />,
  speaker: <g fill="none" stroke="#555" strokeWidth="1.300"><path d="M5 9h4l4-5v16l-4-5H5z" fill="#ddd" /><path d="M16 8c2 3 2 6 0 8" /></g>,
  net: <g fill="#bbb" stroke="#444"><rect x="7" y="1" width="10" height="12" /><rect x="4" y="14" width="15" height="4" /><path d="M12 18v5" /></g>,
  flag: <g fill="none" stroke="#555"><path d="M6 2v20" strokeWidth="1.300" /><path d="M6 3c5-1 8 3 14 1l-3 6 3 4c-5 2-9-2-14 0z" fill="#eee" /></g>,
  desk: <g><rect x="1" y="1" width="22" height="22" fill="#2a6ab8" /><rect x="1" y="17" width="22" height="6" fill="#7ab8e4" /><rect x="3" y="15" width="5" height="5" fill="#3fa04a" /></g>,
};

const Ic = ({ n, s = 24 }) => <svg width={s} height={s} viewBox="0 0 24 24">{ICONS[n]}</svg>;

const FloatIcon = () => (
  <svg width="11" height="11" viewBox="0 0 11 11" fill="none" stroke="#000">
    <path d="M3.500 1.500h6v5h-2M1.500 4.500h6v5h-6z" strokeWidth="1.400" />
  </svg>
);
const Logo = ({ s = 16 }) => (
  <svg width={s} height={s} viewBox="0 0 16 16">
    <ellipse cx="8" cy="8" rx="6" ry="7" fill="#fdf66a" stroke="#1d5a1d" strokeDasharray="3 1" strokeWidth="2" />
    <path d="M12 1L6 14" stroke="#2f8a2f" strokeWidth="2" />
  </svg>
);

/* ---------- toolbars ---------- */
// "|n" grip, "-" divider, "vn" drop arrow ("xn" dimmed), "name:width", "!name" disabled, "*name" pressed
const ROW1 = ['|12', 'doc', 'folder', 'floppy', 'floppyEdit', 'docStar', 'docWrench', '|14', 'touch', 'hand', 'panSel', 'zoomIn', 'zoomOut', 'zoom11', 'zoomFull', 'zoomSel', 'zoomLayer', 'zoomLast', 'zoomNext', 'refresh', '|14', '*identify', 'run:32', 'x16', 'select:32', 'v14', 'deselect', 'expr', 'attrTable', 'abacus', 'ruler', 'v10', 'bubble', 'annoStar:37', 'anno', 'textT:34', 'v10', '|17', 'help', 'whats'];
const ROW2 = ['|12', '!pencils', 'pencil', '!saveEdit', '!ptsAdd', '!blobArrow', '!nodeTool', '!trash', '!cut', '!copy', '!paste', '|15', '!setSquare', '!undo', '!redo', '!blobRot', '!blobHex', '!ringStar', '!twoBlobStar', '!partStar', '!ringX', '!bean', '!ringed', '!split', '!split2', '!merge', '!reshape', '!rotate', '|13', 'abc', 'abcPin', '!abcMove', '!abcEye', '!abcArrow', '!abcRot', '!abcEdit', '|15', 'csw', '|14', 'python'];
const ROW3 = ['|12', '!rasUp', '!rasStar', 'rasMinus', '-', 'vecAdd', 'rasAdd', '!vecStar', '!vecEdit', '!tangle', '!scrollTangle', '!scrollEdit', '|14', 'crosshair', 'compass', 'snapBars', 'digit', 'topoBlue'];

const ToolItem = ({ item }) => {
  if (item[0] === '|') return <Grip $w={+item.slice(1)} />;
  if (item === '-') return <ToolDivider />;
  if (/^[vx]\d+$/.test(item)) return <Tool $w={+item.slice(1)}><DropArrow $off={item[0] === 'x'} /></Tool>;
  const off = item[0] === '!';
  const on = item[0] === '*';
  const [name, w] = item.replace(/^[!*]/, '').split(':');
  return <Tool $w={+w || 35} $off={off} $on={on}><Ic n={name} /></Tool>;
};
const ToolRow = ({ items }) => <Toolbar>{items.map((it, i) => <ToolItem key={i} item={it} />)}</Toolbar>;

/* ---------- data ---------- */
const MENUS = ['Proyecto', 'Edición', 'Ver', 'Capa', 'Configuración', 'Complementos', 'Vectorial', 'Ráster', 'Base de datos', 'Web', 'Procesos', 'Ayuda'];
const LEFT_TOOLS = ['vecAdd', 'rasAdd', 'pgAdd', 'featherAdd', 'sailAdd', 'rectAdd', 'rectChk', 'globeAdd', 'globeB', 'globeV', 'gps', 'vStarMain', 'yellowB'];
const LAYERS = [
  { name: 'Zona industrial (centroide)', on: true, sym: 'dot' },
  { name: 'Puntos puertos', on: true, sym: 'red', sel: true },
  { name: 'Puntos coste', on: true, sym: 'pale' },
  { name: 'Coste total', exp: true, sym: 'raster' },
  { name: 'Coste Algeciras', exp: true, sym: 'raster' },
  { name: 'Coste Cádiz', exp: true, sym: 'raster' },
  { name: 'Coste Sevilla', exp: true, sym: 'raster' },
  { name: 'Coste Huelva', exp: true, sym: 'raster' },
  { name: 'Puertos objetivo', on: true, sym: 'aqua' },
  { name: 'Coste carreteras', exp: true, sym: 'raster' },
  { name: 'Zona industrial', sym: 'tan' },
  { name: 'Carreteras aptas', sym: 'line' },
  { name: 'Zona interés', on: true, sym: 'gray' },
];
const LayerSymbol = ({ kind }) => {
  if (kind === 'raster') return (
    <svg width="16" height="16" viewBox="0 0 16 16">
      <rect width="16" height="16" fill="#5f8fc0" />
      <path d="M0 3h5v5H0zM5 0h6v3H5zM5 8h6v5H5zM0 13h5v3H0z" fill="#2c3e57" />
      <path d="M11 3h5v5h-5zM11 13h5v3h-5z" fill="#fff" />
    </svg>
  );
  const sw = { aqua: '#96e8da', tan: '#cc9470', gray: '#9b9b9b' }[kind];
  return (
    <svg width="16" height="16" viewBox="0 0 16 16">
      {sw && <rect x=".5" y=".5" width="15" height="15" fill={sw} stroke="#555" />}
      {kind === 'dot' && <circle cx="8" cy="8" r="4" fill="#4ba3c3" stroke="#223" />}
      {kind === 'red' && <circle cx="8" cy="8" r="5.500" fill="#b80c24" stroke="#222" />}
      {kind === 'pale' && <circle cx="8" cy="8" r="1.500" fill="#fbeee6" />}
      {kind === 'line' && <path d="M0 8h16" stroke="#333" />}
    </svg>
  );
};
const TOOL_TREE = [
  ['Regular points', 'Vector grid'],
  ['Vector general tools', 'Delete duplicate geometries', 'Join attributes by location', 'Join attributes table', 'Merge vector layers', 'Polygon from layer extent', 'Reproject layer', 'Save selected features', 'Set style for vector layer', 'Snap points to grid', 'Split vector layer'],
  ['Vector geometry tools', 'Concave hull', 'Convert geometry type', 'Convex hull', 'Create points along lines', 'Delaunay triangulation', 'Densify geometries', 'Densify geometries given an interval', 'Dissolve', 'Eliminate sliver polygons', 'Explode lines', 'Extract nodes', 'Fill holes', 'Fixed distance buffer', 'Keep n biggest parts', 'Lines to polygons', 'Multipart to singleparts', 'Points displacement', 'Polygon centroids', 'Polygonize', 'Polygons to lines', 'Simplify geometries', 'Singleparts to multipart', 'Variable distance buffer', 'Voronoi polygons'],
  ['Vector overlay tools', 'Clip', 'Difference', 'Intersection', 'Line intersections', 'Split lines with lines', 'Symetrical difference', 'Union'],
  ['Vector selection tools', 'Extract by attribute', 'Extract by location'],
];

/* ---------- map, traced from the reference ---------- */
const pts = (ox, oy) => (list) => list.map(([x, y]) => `${(ox + x / 3).toFixed(1)},${(oy + y / 3).toFixed(1)}`).join(' ');
const A = pts(345, 160);
const B = pts(345, 640);
const C = pts(900, 600);
const ROADS = [
  A([[50, 5], [100, 30], [150, 62], [185, 75], [230, 130], [250, 140], [262, 95], [275, 70], [300, 40], [325, 5]]),
  A([[655, 745], [668, 700], [680, 680], [715, 688], [750, 675], [760, 645], [790, 628], [800, 605], [830, 585], [860, 560], [880, 520], [915, 500], [940, 508], [955, 480], [960, 450], [1000, 425], [1040, 400], [1075, 405], [1115, 418], [1150, 390], [1150, 345], [1170, 330], [1210, 310], [1250, 300], [1280, 275], [1315, 275], [1360, 280], [1375, 245], [1420, 260], [1450, 272], [1500, 270]]),
  A([[655, 745], [630, 758], [590, 738], [540, 745], [490, 745], [475, 760], [465, 798], [480, 830], [500, 860], [505, 900], [525, 935], [575, 938], [600, 945], [660, 945], [670, 1010], [705, 1020], [735, 1050], [775, 1065], [800, 1047], [840, 1045], [885, 1055]]),
  A([[660, 750], [690, 790], [720, 805], [750, 815], [785, 835], [820, 865], [860, 885], [905, 900], [945, 905]]),
  A([[912, 975], [912, 880], [935, 845], [975, 835], [1045, 830]]),
  A([[1075, 870], [1085, 890], [1070, 920], [1068, 990], [1055, 1000], [1055, 1030], [1070, 1050], [1068, 1100], [1055, 1115], [1030, 1150], [1020, 1185], [985, 1200], [960, 1215], [910, 1215], [860, 1225]]),
  A([[1075, 870], [1090, 830], [1130, 790], [1145, 760], [1150, 700], [1155, 640], [1165, 600], [1185, 585], [1220, 550], [1245, 500], [1250, 470], [1285, 440], [1285, 400], [1300, 340], [1310, 280]]),
  A([[1065, 810], [1075, 780], [1090, 740], [1115, 700], [1125, 650], [1115, 610], [1110, 580], [1140, 550], [1180, 500], [1210, 450], [1250, 430], [1290, 410], [1340, 390], [1380, 350], [1450, 290]]),
  A([[1330, 265], [1360, 190], [1375, 140], [1365, 90], [1358, 40], [1365, 5]]),
  A([[1375, 230], [1415, 160], [1435, 100], [1475, 60], [1490, 10]]),
  A([[1005, 860], [960, 880], [940, 925], [905, 980], [880, 995], [885, 1060], [890, 1120], [880, 1135], [880, 1170], [910, 1195], [910, 1240], [945, 1290], [945, 1370], [920, 1385]]),
  A([[830, 1060], [820, 1100], [825, 1120], [850, 1145], [850, 1200], [870, 1245], [910, 1250], [945, 1250], [1065, 1253], [1095, 1275], [1200, 1275], [1240, 1262]]),
  A([[850, 1165], [880, 1165]]),
  A([[760, 1305], [735, 1310], [740, 1350], [755, 1385], [800, 1395], [820, 1405], [840, 1365], [870, 1375], [920, 1385], [930, 1415], [965, 1430], [995, 1465], [995, 1490], [1080, 1490], [1160, 1440], [1225, 1430], [1295, 1410], [1300, 1380], [1335, 1342]]),
  A([[755, 1240], [800, 1265], [790, 1285]]),
  A([[800, 1265], [830, 1245], [870, 1225]]),
  A([[1355, 1500], [1355, 1445], [1405, 1420], [1445, 1415], [1470, 1380]]),
  B([[985, 5], [995, 50], [985, 80], [975, 95], [995, 130], [995, 180], [1020, 195], [1070, 190], [1095, 212], [1105, 240], [1095, 250], [1095, 330], [1085, 335], [1050, 320], [1040, 270], [1025, 210]]),
  B([[995, 50], [1075, 50], [1120, 35], [1150, 15], [1190, 3]]),
  B([[1095, 345], [1135, 360], [1145, 390], [1145, 420], [1180, 428], [1225, 418], [1265, 405], [1255, 360], [1275, 325], [1310, 265], [1325, 190], [1365, 150], [1390, 110], [1365, 70], [1355, 5]]),
  B([[1270, 410], [1280, 490], [1300, 525], [1335, 550]]),
  B([[1280, 420], [1375, 438], [1400, 485], [1440, 505], [1470, 480], [1510, 485], [1560, 515]]),
  C([[960, 190], [1080, 183], [1130, 185]]),
  C([[1080, 180], [1110, 130], [1125, 95], [1160, 92]]),
  C([[1130, 175], [1160, 150], [1215, 140]]),
  C([[1015, 190], [1005, 210], [975, 240], [965, 265]]),
  C([[540, 530], [525, 570], [535, 615], [560, 630], [565, 665], [625, 668]]),
  C([[745, 540], [705, 570], [705, 595], [680, 620], [645, 630], [630, 665], [622, 710], [625, 730], [650, 760], [680, 785]]),
  C([[565, 665], [540, 695], [490, 745], [482, 780], [505, 790], [480, 820], [475, 860], [475, 905], [400, 940], [395, 960], [350, 970], [290, 1030], [245, 1065], [205, 1055], [175, 1025], [100, 985], [65, 940], [60, 905], [40, 880], [35, 800], [20, 775], [0, 770]]),
];
const DOTS_A = [[1068, 333], [1089, 363], [1355, 816], [1047, 825], [1065, 836], [990, 843], [1017, 860], [965, 885], [953, 915], [987, 957], [992, 990], [618, 993], [873, 1023], [840, 1053], [837, 1245], [818, 1254], [782, 1263], [732, 1308], [890, 1317], [867, 1344], [903, 1371], [938, 1467]];
const DOTS_C = [[1017, 188], [575, 680], [540, 725], [597, 716], [648, 734], [681, 722], [458, 872], [206, 1106]];
const place = (ox, oy) => ([x, y]) => [ox + x / 3, oy + y / 3];
const WHITE_TOP = `1051,160 1353,160 1353,792 ${C([[1225, 410], [1175, 240], [1257, 162], [1110, 35], [1100, 0]])} 1240,598 1228,596 1218,593 1000,450 829,343 823,342 810,323 798,321 790,311 828,308 960,252`;
const WHITE_BOTTOM = B([[-3, 490], [135, 610], [170, 628], [215, 665], [260, 672], [378, 730], [615, 780], [620, 728], [740, 738], [948, 768], [965, 777], [997, 768], [1045, 725], [1155, 686], [1192, 645], [1190, 865], [1220, 1005], [1238, 1005], [1262, 1075], [-3, 1075]]);

const MapView = () => (
  <svg width="1007" height="837" viewBox="345 160 1007 837">
    <rect x="345" y="160" width="1007" height="837" fill="#9b9b9b" />
    <polygon points={WHITE_TOP} fill="#fff" stroke="#222" />
    <polygon points={WHITE_BOTTOM} fill="#fff" stroke="#222" />
    <path d="M1303 716L1343 687" stroke="#222" />
    <path d="M542 207l2 10" stroke="#111" strokeWidth="1.500" />
    <polygon points={A([[788, 350], [852, 334], [855, 340], [792, 355]])} fill="#fff" stroke="#111" />
    {ROADS.map((r, i) => (
      <polyline key={i} points={r} fill="none" stroke="#f7ece3" strokeWidth="3.600" strokeLinecap="round" strokeDasharray="0.1 3.2" />
    ))}
    <path d="M575 566l8 4 6 9-5-2-8-5z" fill="#8fdcd0" stroke="#222" strokeWidth=".8" />
    <path d="M573 563l10 13M581 562l3 6M586 573l2 9" stroke="#222" fill="none" />
    <circle cx="594.500" cy="576.500" r="5.500" fill="#f00" stroke="#300" strokeWidth=".6" />
    <circle cx="1071" cy="868" r="5.500" fill="#f00" stroke="#300" strokeWidth=".6" />
    <path d="M1072 875l6 4 9-2v6l-7 3-6 0-2-5zM1080 866l-2 12M1085 876v12M1072 885l4 3" fill="#8fdcd0" stroke="#222" strokeWidth="1" />
    {[...DOTS_A.map(place(345, 160)), [597.3, 575], ...DOTS_C.map(place(900, 600))].map(([x, y], i) => (
      <circle key={i} cx={x} cy={y} r="3.800" fill="#4ba3c3" stroke="#1a2a33" strokeWidth=".9" />
    ))}
  </svg>
);

const DockHeader = ({ title }) => (
  <DockTitle>
    <TitleGrip />
    <span>{title}</span>
    <TitleGrip />
    <DockBtns>
      <DockBtn $ml={0}><FloatIcon /></DockBtn>
      <DockBtn><XMark /></DockBtn>
    </DockBtns>
  </DockTitle>
);

const SelectField = ({ label, value }) => (
  <Field>
    <FieldLabel>{label}</FieldLabel>
    <Combo>
      <ComboText>{value}</ComboText>
      <ComboArrow><DropArrow /></ComboArrow>
    </Combo>
  </Field>
);

const Spinner = ({ w, h, value }) => (
  <SpinBox $w={w} $h={h}>
    <SpinText>{value}</SpinText>
    <SpinArrows><SpinPart><Tri $up /></SpinPart><SpinPart><Tri /></SpinPart></SpinArrows>
  </SpinBox>
);

export default function App() {
  return (
    <Desktop>
      <GlobalStyle />
      <TitleBar>
        <Logo />
        QGIS 2.8.1-Wien - a
        <WinButtons>
          <WinButton><svg width="8" height="8"><path d="M0 7h6" stroke="#000" strokeWidth="2" /></svg></WinButton>
          <WinButton><FloatIcon /></WinButton>
          <WinButton $gap={2}><XMark /></WinButton>
        </WinButtons>
      </TitleBar>
      <MenuBar>{MENUS.map(m => <span key={m}>{m}</span>)}</MenuBar>
      <ToolRow items={ROW1} />
      <ToolRow items={ROW2} />
      <ToolRow items={ROW3} />

      <Body>
        <LeftBar>
          <LeftBarGrip />
          {LEFT_TOOLS.map(n => (
            <LeftTool key={n}>
              <Ic n={n} s={28} />
              {n === 'vStarMain' && <LeftToolArrow />}
            </LeftTool>
          ))}
        </LeftBar>

        <Dock $w={285}>
          <DockHeader title="Capas" />
          <IconRow>
            {['clip', 'eye', 'funnel', 'sheetDown', 'sheetUp', 'removeSq'].map(n => (
              <PanelTool key={n} $off={n === 'clip'}>
                <Ic n={n} s={n === 'removeSq' || n === 'clip' ? 20 : 22} />
                {n === 'eye' && <MiniArrow />}
              </PanelTool>
            ))}
          </IconRow>
          <Sunken $mt={4} $h={326} $pt={2}>
            {LAYERS.map((l, i) => (
              <LayerRow key={l.name} $sel={l.sel}>
                <LayerGuide $last={i === LAYERS.length - 1}>{l.exp && <ExpBox />}</LayerGuide>
                <Check>{l.on && <XMark />}</Check>
                <SymbolSlot><LayerSymbol kind={l.sym} /></SymbolSlot>
                {l.name}
              </LayerRow>
            ))}
          </Sunken>
          <HandleRow><HandleGrip /></HandleRow>
          <DockHeader title="Resultados de la identificación" />
          <IconRow>
            {['sheetDown', 'sheetUp', 'sheetStar', 'sheetList', 'yellowNo', 'copy', 'print'].map(n => (
              <PanelTool key={n} $off={n === 'copy' || n === 'print'}><Ic n={n} s={n === 'copy' || n === 'print' ? 18 : 20} /></PanelTool>
            ))}
          </IconRow>
          <Sunken $mt={4} $h={339}>
            <TableHead>
              <HeadCell $w={158}>Objeto espacial</HeadCell>
              <HeadCell>Valor</HeadCell>
            </TableHead>
            <ResultRow><ResultName $in={5}><ExpBox $open />Puntos coste</ResultName></ResultRow>
            <ResultRow $sel><ResultName $in={25}><ExpBox $open />value</ResultName>723.029999999999973</ResultRow>
            <ResultRow><ResultName $in={45}><ExpBox />(Derivado)</ResultName></ResultRow>
            <ResultRow $alt><ResultName $in={45}><ExpBox />(Acciones)</ResultName></ResultRow>
            <ResultRow><ResultName $in={45} $leaf><LeafName>value</LeafName></ResultName>723.029999999999973</ResultRow>
            <ResultRow $alt><ResultName $in={45} $leaf><LeafName>id</LeafName></ResultName>753</ResultRow>
          </Sunken>
          <FormRow $h={19} $mt={7}>
            <FormLabel $w={32}>Modo</FormLabel>
            <Combo $w={114}><ComboText>Selección de capa</ComboText><ComboArrow><DropArrow /></ComboArrow></Combo>
            <Check $ml={6} />
            <FormLabel $w={120} $ml={5}>Auto abrir formulario</FormLabel>
          </FormRow>
          <FormRow $h={22} $mt={8}>
            <FormLabel $w={21} $off>Ver</FormLabel>
            <Combo $w={72} $h={20} $off><ComboText>Árbol</ComboText><ComboArrow><DropArrow $off /></ComboArrow></Combo>
            <PushButton $w={47} $h={22} $ml={135}>Ayuda</PushButton>
          </FormRow>
        </Dock>

        <Splitter $w={7}><SplitGrip /></Splitter>
        <MapFrame><MapView /></MapFrame>
        <Splitter $w={8}><SplitGrip /></Splitter>

        <Dock $w={687} $pad="2px 0 0">
          <DockHeader title="Caja de herramientas de procesado" />
          <SearchBox>Buscar...</SearchBox>
          <ToolTreeBox>
            <ToolTree>
              {TOOL_TREE.map((group, gi) => {
                const items = gi === 0 ? group : group.slice(1);
                return (
                  <React.Fragment key={gi}>
                    {gi > 0 && <CategoryRow><ExpBox $open />{group[0]}</CategoryRow>}
                    {items.map(name => (
                      <ItemRow key={name} $sel={name === 'Polygon centroids'}>
                        <svg width="15" height="16" viewBox="0 0 24 24"><QLeaf /></svg>
                        <ItemLabel>{name}</ItemLabel>
                      </ItemRow>
                    ))}
                  </React.Fragment>
                );
              })}
            </ToolTree>
            <ScrollBar>
              <ScrollBtn><Tri $up /></ScrollBtn>
              <ScrollThumb><ThumbRidges /></ScrollThumb>
              <ScrollBtn><Tri $up /></ScrollBtn>
              <ScrollBtn><Tri /></ScrollBtn>
            </ScrollBar>
          </ToolTreeBox>
          <ComboGap />
          <Combo $h={18}><ComboText>Advanced interface</ComboText><ComboArrow><DropArrow /></ComboArrow></Combo>
        </Dock>
      </Body>

      <StatusBar>
        <StatusIcon><Ic n="satellite" s={16} /></StatusIcon>
        <StatusText $w={73}>Coordenada:</StatusText>
        <LineInput $w={298} $h={19} $center>172629,4109565</LineInput>
        <StatusText $w={43} $ml={10}>Escala</StatusText>
        <Combo $w={87} $h={19} $field>
          <ComboText>1:570.811</ComboText>
          <ComboArrow $solid><DropArrow /></ComboArrow>
        </Combo>
        <StatusText $w={56} $ml={9}>Rotación:</StatusText>
        <Spinner w={99} h={23} value="0,0" />
        <Check $ml={6}><XMark /></Check>
        <StatusText $w={79} $ml={3}>Representar</StatusText>
        <Ic n="epsg" s={14} />
        <StatusText $w={128} $ml={6}>EPSG:25830 (al vuelo)</StatusText>
        <Ic n="msgBubble" s={18} />
      </StatusBar>

      <Taskbar>
        <StartButton><Ic n="winlogo" s={16} />Inicio</StartButton>
        <TaskApp $w={28} $ml={9}><Ic n="explorer" s={18} /></TaskApp>
        <TaskSeam />
        <TaskPlain $w={37}><Ic n="chrome" s={16} /></TaskPlain>
        <TaskApp $w={31} $down><Logo s={18} /></TaskApp>
        <Lang>ES</Lang>
        <Tray>
          <Tri $up />
          <Ic n="speaker" s={16} />
          <Ic n="net" s={16} />
          <Ic n="flag" s={16} />
          <Clock>7:49</Clock>
          <Ic n="desk" s={16} />
        </Tray>
      </Taskbar>

      <Dialog>
        <DialogTitle>
          <Logo s={14} />
          Matriz de distancia
          <DialogBtns>
            <DialogBtn><b>?</b></DialogBtn>
            <DialogBtn><XMark /></DialogBtn>
          </DialogBtns>
        </DialogTitle>
        <DialogBody>
          <SelectField label="Capa de puntos de entrada" value="Zona industrial (centroide)" />
          <SelectField label="Campo ID único de entrada" value="id" />
          <SelectField label="Capa de puntos objetivo" value="Puntos coste" />
          <SelectField label="Campo ID único objetivo" value="id" />
          <Group>
            <Legend>Tipo de matriz de salida</Legend>
            <OptionRow><Radio $on />Matriz de distancia lineal (N*k x 3)</OptionRow>
            <OptionRow><Radio />Matriz de distancia estándar (N x T)</OptionRow>
            <OptionRow><Radio />Matriz de distancia resumen (media, desv. est., mín, máx)</OptionRow>
            <OptionRow>
              <Check><XMark /></Check>
              <OptionText>Usar sólo los puntos objetivo más cercanos (k)</OptionText>
              <Spinner w={85} h={18} value="1" />
            </OptionRow>
          </Group>
          <OutLabel>Matriz de distancia de salida</OutLabel>
          <OutRow>
            <LineInput $w={274} $h={19}>C:/Users/malkab/Desktop/Data/Proceso/matriz_distancia.csv</LineInput>
            <PushButton $w={75} $h={23} $ml={11} $def>Explorar</PushButton>
          </OutRow>
          <BottomRow>
            <Progress><ProgressFill />0%</Progress>
            <PushButton $w={75} $h={23} $ml={25}>Aceptar</PushButton>
            <PushButton $w={75} $h={23} $ml={10}>Cerrar</PushButton>
          </BottomRow>
          <SizeGrip />
        </DialogBody>
      </Dialog>
    </Desktop>
  );
}
